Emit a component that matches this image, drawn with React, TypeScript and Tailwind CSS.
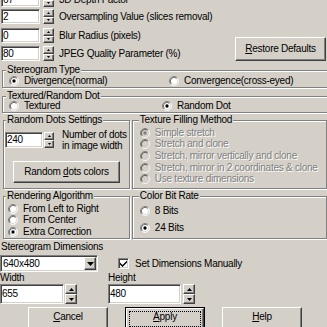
import React from "react";

// classic 3D looks
const raised =
  "bg-[#d4d0c8] border border-t-white border-l-white border-r-[#404040] border-b-[#404040] shadow-[inset_-1px_-1px_0_#808080]";
const sunken =
  "bg-white border border-t-[#808080] border-l-[#808080] border-r-white border-b-white shadow-[inset_1px_1px_0_#404040,inset_-1px_-1px_0_#d4d0c8]";
const etched = "relative border border-[#808080] shadow-[inset_1px_1px_0_#fff,1px_1px_0_#fff]";
const disabledText = "text-[#808080] [text-shadow:1px_1px_0_#fff]";

function Arrow({ up, big }: { up?: boolean; big?: boolean }) {
  const w = big ? 5 : 3;
  const h = big ? 3 : 2;
  return (
    <svg width={w} height={h} viewBox={`0 0 ${w} ${h}`} className="block">
      <path d={up ? `M${w / 2} 0L${w} ${h}H0Z` : `M0 0H${w}L${w / 2} ${h}Z`} fill="#000" />
    </svg>
  );
}

function Spin({ className, big }: { className: string; big?: boolean }) {
  return (
    <div className={`flex flex-col ${className}`}>
      <div className={`flex-1 flex items-center justify-center ${raised}`}>
        <Arrow up big={big} />
      </div>
      <div className={`flex-1 flex items-center justify-center ${raised}`}>
        <Arrow big={big} />
      </div>
    </div>
  );
}

function Edit({ className, children }: { className: string; children: React.ReactNode }) {
  return <div className={`${sunken} flex items-center pl-[1px] overflow-hidden ${className}`}>{children}</div>;
}

function Btn({ className, children, isDefault }: { className: string; children: React.ReactNode; isDefault?: boolean }) {
  if (isDefault)
    return (
      <div className={`border border-black ${className}`}>
        <div className={`${raised} w-full h-full p-[2px]`}>
          <div className="w-full h-full border border-dotted border-black flex items-center justify-center">
            <span className="whitespace-nowrap">{children}</span>
          </div>
        </div>
      </div>
    );
  return (
    <div className={`${raised} flex items-center justify-center ${className}`}>
      <span className="whitespace-nowrap">{children}</span>
    </div>
  );
}

function Radio({ checked, disabled }: { checked?: boolean; disabled?: boolean }) {
  return (
    <svg width="10" height="10" viewBox="0 0 12 12" className="shrink-0 block">
      <circle cx="6" cy="6" r="5" fill={disabled ? "#d4d0c8" : "#fff"} />
      <path d="M2.11 9.89A5.5 5.5 0 0 1 9.89 2.11" fill="none" stroke="#808080" />
      <path d="M9.89 2.11A5.5 5.5 0 0 1 2.11 9.89" fill="none" stroke="#fff" />
      <path d="M2.82 9.18A4.5 4.5 0 0 1 9.18 2.82" fill="none" stroke="#404040" />
      <path d="M9.18 2.82A4.5 4.5 0 0 1 2.82 9.18" fill="none" stroke="#d4d0c8" />
      {checked && <circle cx="6" cy="6" r="2" fill={disabled ? "#808080" : "#000"} />}
    </svg>
  );
}

function RadioItem({
  checked,
  disabled,
  className = "",
  children,
}: {
  checked?: boolean;
  disabled?: boolean;
  className?: string;
  children: React.ReactNode;
}) {
  return (
    <div className={`flex items-center ${className}`}>
      <Radio checked={checked} disabled={disabled} />
      <span className={`ml-[5px] whitespace-nowrap ${disabled ? disabledText : ""}`}>{children}</span>
    </div>
  );
}

function Group({
  label,
  labelLeft,
  className,
  children,
}: {
  label: string;
  labelLeft: string;
  className: string;
  children: React.ReactNode;
}) {
  return (
    <div className={`${etched} ${className}`}>
      <span className={`absolute top-[-6px] ${labelLeft} bg-[#d4d0c8] px-[1px] leading-[10px] whitespace-nowrap`}>
        {label}
      </span>
      {children}
    </div>
  );
}

function ParamRow({ value, label, className }: { value: string; label: string; className: string }) {
  return (
    <div className={`flex items-center h-[15px] ${className}`}>
      <Edit className="ml-[1px] w-[39px] h-full">{value}</Edit>
      <Spin className="ml-[3px] w-[11px] h-full" />
      <span className="ml-[5px] whitespace-nowrap">{label}</span>
    </div>
  );
}

export default function App() {
  return (
    <div className="w-[327px] h-[327px] overflow-hidden bg-[#d4d0c8] text-black font-['Liberation_Sans',Arial,sans-serif] text-[10px] leading-[12px] tracking-[-0.25px]">
      <div className="flex mt-[-8px]">
        <div className="w-[235px] flex flex-col">
          <ParamRow value="67" label="3D Depth Factor" className="" />
          <ParamRow value="2" label="Oversampling Value (slices removal)" className="mt-[2px]" />
          <ParamRow value="0" label="Blur Radius (pixels)" className="mt-[4px]" />
          <ParamRow value="80" label="JPEG Quality Parameter (%)" className="mt-[3px]" />
        </div>
        <Btn className="mt-[45px] w-[91px] h-[24px]">
          <span className="underline underline-offset-[1px]">R</span>estore Defaults
        </Btn>
      </div>

      <Group label="Stereogram Type" labelLeft="left-[3px]" className="mt-[9px] ml-[2px] w-[340px] h-[18px] pt-[5px] pl-[6px]">
        <div className="flex items-center h-[10px]">
          <RadioItem checked className="w-[160px]">
            Divergence(normal)
          </RadioItem>
          <RadioItem>Convergence(cross-eyed)</RadioItem>
        </div>
      </Group>

      <Group label="Textured/Random Dot" labelLeft="left-[3px]" className="mt-[8px] ml-[2px] w-[340px] h-[17px] pt-[4px] pl-[6px]">
        <div className="flex items-center h-[10px]">
          <RadioItem className="w-[153px]">Textured</RadioItem>
          <RadioItem checked>Random Dot</RadioItem>
        </div>
      </Group>

      <div className="flex mt-[7px]">
        <Group label="Random Dots Settings" labelLeft="left-[2px]" className="ml-[3px] w-[130px] h-[69px]">
          <div className="flex items-start mt-[11px] ml-[1px]">
            <Edit className="w-[38px] h-[16px]">240</Edit>
            <Spin className="ml-[1px] w-[10px] h-[16px]" />
            <div className="ml-[8px] -mt-[3px] leading-[11px] whitespace-nowrap">
              Number of dots
              <br />
              in image width
            </div>
          </div>
          <Btn className="mt-[10px] ml-[9px] w-[107px] h-[22px]">
            Random <span className="underline underline-offset-[1px]">d</span>ots colors
          </Btn>
        </Group>
        <Group label="Texture Filling Method" labelLeft="left-[6px]" className="ml-[2px] w-[200px] h-[69px] pt-[6px] pl-[7px]">
          <div className="flex flex-col">
            <RadioItem checked disabled className="h-[11.6px]">
              Simple stretch
            </RadioItem>
            <RadioItem disabled className="h-[11.6px]">
              Stretch and clone
            </RadioItem>
            <RadioItem disabled className="h-[11.6px]">
              Stretch, mirror vertically and clone
            </RadioItem>
            <RadioItem disabled className="h-[11.6px]">
              Stretch, mirror in 2 coordinates &amp; clone
            </RadioItem>
            <RadioItem disabled className="h-[11.6px]">
              Use texture dimensions
            </RadioItem>
          </div>
        </Group>
      </div>

      <div className="flex mt-[7px]">
        <Group label="Rendering Algorithm" labelLeft="left-[2px]" className="ml-[3px] w-[130px] h-[43px] pt-[6px] pl-[4px]">
          <RadioItem className="h-[11.5px]">From Left to Right</RadioItem>
          <RadioItem className="h-[11.5px]">From Center</RadioItem>
          <RadioItem checked className="h-[11.5px]">
            Extra Correction
          </RadioItem>
        </Group>
        <Group label="Color Bit Rate" labelLeft="left-[6px]" className="ml-[2px] w-[200px] h-[43px] pt-[6px] pl-[7px]">
          <RadioItem className="h-[16.5px]">8 Bits</RadioItem>
          <RadioItem checked className="h-[16.5px]">
            24 Bits
          </RadioItem>
        </Group>
      </div>

      <div className="mt-[2px] ml-[1px] whitespace-nowrap">Stereogram Dimensions</div>

      <div className="flex items-center mt-[2px]">
        <div className={`${sunken} flex p-[1px] w-[98px] h-[17px]`}>
          <div className="flex-1 flex items-center pl-[1px]">640x480</div>
          <div className={`${raised} w-[12px] h-full flex items-center justify-center`}>
            <svg width="7" height="4" viewBox="0 0 7 4" className="block">
              <path d="M0 0H7L3.5 4Z" fill="#000" />
            </svg>
          </div>
        </div>
        <div className={`${sunken} ml-[20px] w-[11px] h-[11px] flex items-center justify-center`}>
          <svg width="7" height="7" viewBox="0 0 7 7" className="block">
            <path d="M0 2.5L2.5 5L7 0.5V2.5L2.5 7L0 4.5Z" fill="#000" />
          </svg>
        </div>
        <span className="ml-[6px] whitespace-nowrap">Set Dimensions Manually</span>
      </div>

      <div className="flex">
        <span className="w-[108px]">Width</span>
        <span>Height</span>
      </div>

      <div className="flex">
        <Edit className="w-[64px] h-[20px]">655</Edit>
        <Spin big className="ml-[1px] w-[12px] h-[20px]" />
        <Edit className="ml-[31px] w-[73px] h-[20px]">480</Edit>
        <Spin big className="ml-[2px] w-[12px] h-[20px]" />
      </div>

      <div className="flex mt-[3px]">
        <Btn className="ml-[28px] w-[80px] h-[24px] pb-[4px]">
          <span className="underline underline-offset-[1px]">C</span>ancel
        </Btn>
        <Btn isDefault className="ml-[17px] w-[80px] h-[24px]">
          <span className="relative -top-[2px]">
            <span className="underline underline-offset-[1px]">A</span>pply
          </span>
        </Btn>
        <Btn className="ml-[17px] w-[80px] h-[24px] pb-[4px]">
          <span className="underline underline-offset-[1px]">H</span>elp
        </Btn>
      </div>
    </div>
  );
}
